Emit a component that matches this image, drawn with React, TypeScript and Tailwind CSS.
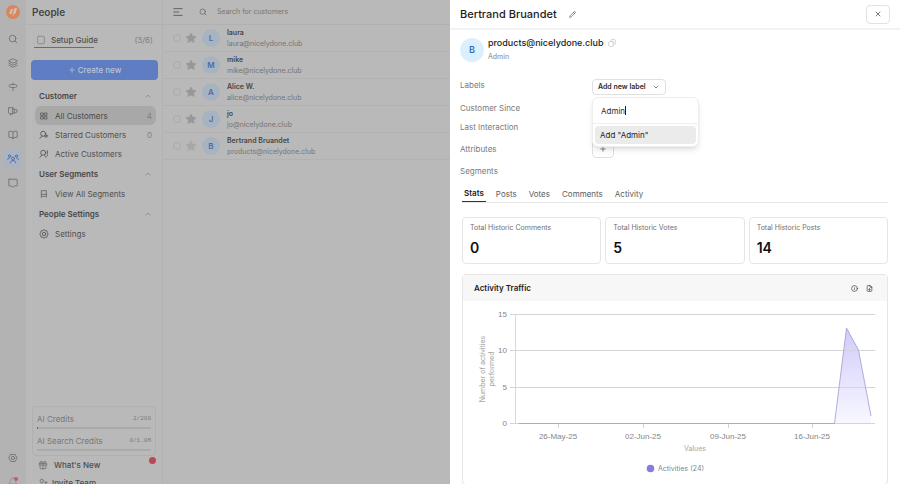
import {
  Bell,
  BookOpen,
  ChevronDown,
  ChevronUp,
  Copy,
  FileDown,
  Gift,
  Info,
  Layers,
  Pencil,
  Plus,
  Search,
  Signpost,
  Star,
  UserPlus,
  X,
} from 'lucide-react'
import type { ReactNode } from 'react'

const customers = [
  { name: 'laura', email: 'laura@nicelydone.club', starred: true },
  { name: 'mike', email: 'mike@nicelydone.club', starred: true },
  { name: 'Alice W.', email: 'alice@nicelydone.club', starred: true },
  { name: 'jo', email: 'jo@nicelydone.club', starred: true },
  { name: 'Bertrand Bruandet', email: 'products@nicelydone.club', starred: false },
]

const stats = [
  { label: 'Total Historic Comments', value: 0 },
  { label: 'Total Historic Votes', value: 5 },
  { label: 'Total Historic Posts', value: 14 },
]

const gridLines = [
  { value: 15, y: 13 },
  { value: 10, y: 49 },
  { value: 5, y: 86 },
  { value: 0, y: 122 },
]

const dates = [
  { label: '26-May-25', x: 96 },
  { label: '02-Jun-25', x: 181 },
  { label: '09-Jun-25', x: 266 },
  { label: '16-Jun-25', x: 350 },
]

function Icon({ children, className }: { children: ReactNode; className: string }) {
  return (
    <svg viewBox="0 0 24 24" fill="none" stroke="currentColor" strokeWidth="2" strokeLinecap="round" strokeLinejoin="round" className={className} aria-hidden="true">
      {children}
    </svg>
  )
}

function Logo() {
  return (
    <svg viewBox="0 0 28 28" className="size-3.5" aria-hidden="true">
      <circle cx="14" cy="14" r="14" fill="#d9865f" />
      <path d="M6.500 18 9 10q.6-2 2.500-2H14l-2.600 8.500Q10.800 18 9 18z" fill="#cbc5c2" />
      <path d="M12.500 22.500 16.500 8q.5-2 2.300-2H22l-2.800 10q-.6 2-2.500 2h-1.500l-1.200 4.500z" fill="#cbc5c2" />
    </svg>
  )
}

function PeopleIcon() {
  return (
    <Icon className="size-3">
      <circle cx="12" cy="11" r="3" />
      <path d="M6.500 20c.5-3 2.500-5 5.500-5s5 2 5.500 5" />
      <circle cx="5" cy="6" r="2.200" />
      <circle cx="19" cy="6" r="2.200" />
      <path d="M1.500 13c.3-2 1.500-3.200 3.500-3.200M22.500 13c-.3-2-1.500-3.200-3.500-3.200" />
    </Icon>
  )
}

function NutIcon({ className }: { className: string }) {
  return (
    <Icon className={className}>
      <path d="M7 3.500h10L22 12l-5 8.500H7L2 12z" />
      <circle cx="12" cy="12" r="4" />
    </Icon>
  )
}

function RailButton({ label, active, children }: { label: string; active?: boolean; children: ReactNode }) {
  return (
    <button
      aria-label={label}
      className={active ? 'flex h-[18px] w-[18px] items-center justify-center rounded bg-[#a9b3c1] text-[#506fb0]' : 'flex h-[18px] w-[18px] items-center justify-center text-[#6c6c6c]'}
    >
      {children}
    </button>
  )
}

function Rail() {
  return (
    <nav aria-label="Main" className="flex w-[26px] shrink-0 flex-col items-center bg-[#b3b3b3]">
      <a href="#home" aria-label="Home" className="flex h-[24px] items-center">
        <Logo />
      </a>
      <div className="flex flex-col gap-1.5 pt-1.5">
        <RailButton label="Search"><Search className="size-2.5" /></RailButton>
        <RailButton label="Feedback"><Layers className="size-2.5" /></RailButton>
        <RailButton label="Roadmap"><Signpost className="size-2.5" /></RailButton>
        <RailButton label="Changelog">
          <Icon className="size-2.5">
            <path d="M2 4h9l4 3v10l-4 2H7l-5-2zM11 4v15M15 8h3a4 4 0 0 1 0 8h-3M6 19v3" />
          </Icon>
        </RailButton>
        <RailButton label="Docs"><BookOpen className="size-2.5" /></RailButton>
        <RailButton label="People" active><PeopleIcon /></RailButton>
        <RailButton label="Widgets">
          <Icon className="size-2.5">
            <path d="M3 3h18a1 1 0 0 1 1 1v14a1 1 0 0 1-1 1h-5l-2 2h-4l-2-2H3a1 1 0 0 1-1-1V4a1 1 0 0 1 1-1z" />
          </Icon>
        </RailButton>
      </div>
      <div className="mt-auto flex flex-col gap-2.5">
        <RailButton label="Settings"><NutIcon className="size-2.5" /></RailButton>
        <div className="relative flex h-[7px] justify-center overflow-hidden text-[#a0808a]">
          <Bell className="size-2.5 shrink-0" />
          <span className="absolute top-0 right-1 size-1 rounded-full bg-[#b5606f]" />
        </div>
      </div>
    </nav>
  )
}

function SectionTitle({ children }: { children: ReactNode }) {
  return (
    <button className="flex h-[21px] w-full items-center justify-between pr-1 text-[8px] font-semibold text-[#474747]">
      {children}
      <ChevronUp className="size-2 text-[#808080]" />
    </button>
  )
}

function SideLink({ icon, label, count, active }: { icon: ReactNode; label: string; count?: number; active?: boolean }) {
  return (
    <a
      href="#people"
      className={active ? '-ml-1 flex h-[19px] items-center gap-1.5 rounded-md bg-[#a8a8a8] px-1 text-[8px] text-[#484848]' : '-ml-1 flex h-[19px] items-center gap-1.5 px-1 text-[8px] text-[#505050]'}
    >
      <span className="flex w-2.5 justify-center">{icon}</span>
      <span>{label}</span>
      {count !== undefined && <span className="ml-auto text-[#808080]">{count}</span>}
    </a>
  )
}

function Credit({ label, value, used }: { label: string; value: string; used?: boolean }) {
  return (
    <div>
      <div className="flex h-[15px] items-center justify-between">
        <span className="text-[8px] text-[#777]">{label}</span>
        <span className="font-['Liberation_Mono',monospace] text-[6px] text-[#7c7c7c]">{value}</span>
      </div>
      <div className="mt-px mb-1 flex h-[2px] rounded-full bg-[#aaa]">
        {used && <div className="w-px bg-[#4c6bab]" />}
      </div>
    </div>
  )
}

function Sidebar() {
  return (
    <aside className="flex w-[137px] shrink-0 flex-col border-r border-[#b2b2b2]">
      <h1 className="flex h-[25px] shrink-0 items-center border-b border-[#b1b1b1] px-1.5 text-[10px] font-semibold text-[#454545]">People</h1>
      <div className="pr-1 pl-[5px]">
        <div className="mt-[7px] flex h-[15px] items-center px-[5px] text-[8px] text-[#505050]">
          <Icon className="mr-[5px] size-2.5 text-[#858585]">
            <rect x="4" y="3" width="16" height="18" rx="2" />
          </Icon>
          <a href="#setup" className="font-medium">Setup Guide</a>
          <span className="ml-auto text-[#808080]">(3/6)</span>
        </div>
        <div className="mx-[3px] h-px w-[60px] bg-[#506fb3]" />
        <button className="mt-3 flex h-[20px] w-full items-center justify-center gap-0.5 rounded bg-[#5e7dc3] text-[8px] font-medium text-[#bcc3d3]">
          <Plus className="size-2" />
          Create new
        </button>
      </div>
      <div className="flex flex-col pt-[5px] pr-1.5 pl-[13px]">
        <SectionTitle>Customer</SectionTitle>
        <SideLink
          active
          label="All Customers"
          count={4}
          icon={
            <Icon className="size-2">
              <rect x="3" y="3" width="7" height="7" />
              <rect x="14" y="3" width="7" height="7" />
              <rect x="3" y="14" width="7" height="7" />
              <rect x="14" y="14" width="7" height="7" />
            </Icon>
          }
        />
        <SideLink
          label="Starred Customers"
          count={0}
          icon={
            <Icon className="size-2.5">
              <circle cx="10" cy="9" r="6" />
              <path d="M2 20c1-2 3-4 5-5M13 15l3 2M16 14h5M18.500 12v5" />
            </Icon>
          }
        />
        <SideLink
          label="Active Customers"
          icon={
            <Icon className="size-2.5">
              <circle cx="10" cy="9" r="6" />
              <path d="M2 20c1-2 3-4 5-5M13 15c2 1 4 3 4 5M20 4v7M20 14v2" />
            </Icon>
          }
        />
        <SectionTitle>User Segments</SectionTitle>
        <SideLink
          label="View All Segments"
          icon={
            <Icon className="size-2">
              <path d="M5 2h14v20l-3-3H8l-3 3zM5 13h14" />
            </Icon>
          }
        />
        <SectionTitle>People Settings</SectionTitle>
        <SideLink
          label="Settings"
          icon={
            <Icon className="size-2.5">
              <path d="m12 2 3 2 4 .5 1 4 2 3.500-2 3.500-1 4-4 .5-3 2-3-2-4-.5-1-4L2 12l2-3.500 1-4L9 4z" />
              <circle cx="12" cy="12" r="4" />
            </Icon>
          }
        />
      </div>
      <div className="mt-auto shrink-0 px-1.5">
        <div className="rounded border border-[#b0b0b0] px-1 pt-1">
          <Credit label="AI Credits" value="2/200" used />
          <Credit label="AI Search Credits" value="0/1.0M" />
        </div>
        <div className="relative h-[28px] overflow-hidden pl-1.5 text-[8px] font-medium text-[#4c4c4c]">
          <a href="#new" className="flex h-[18px] items-center gap-1.5">
            <Gift className="size-2.5 text-[#707070]" />
            What's New
          </a>
          <a href="#invite" className="flex h-[18px] items-center gap-1">
            <UserPlus className="size-2.5 text-[#707070]" />
            Invite Team
          </a>
          <span className="absolute top-px right-0 size-[7px] rounded-full bg-[#b84a58]" />
        </div>
      </div>
    </aside>
  )
}

function CustomerList() {
  return (
    <section className="min-w-0 flex-1">
      <div className="flex h-[25px] items-center border-b border-[#b1b1b1] pl-2.5">
        <button aria-label="Toggle sidebar">
          <Icon className="size-2.5 text-[#505050]">
            <path d="M2 4h20M2 12h12M2 20h20" />
          </Icon>
        </button>
        <Search className="ml-4 size-2 text-[#5a5a5a]" />
        <input aria-label="Search customers" placeholder="Search for customers" className="ml-2.5 w-48 text-[7px] outline-none placeholder:text-[#757575]" />
      </div>
      {customers.map(c => (
        <div key={c.email} className="flex h-[27px] items-center border-b border-[#b2b2b2] pl-2.5">
          <input type="checkbox" aria-label={c.name} className="size-2 appearance-none rounded-full border border-[#ababab]" />
          <Star className={c.starred ? 'ml-1 size-3 fill-[#989898] text-[#989898]' : 'ml-1 size-3 fill-[#a8a8a8] text-[#a8a8a8]'} strokeWidth={1} />
          <span className="ml-[5px] flex size-[18px] items-center justify-center rounded-full bg-[#a7b3c0] text-[8px] font-semibold text-[#4d6da9]">
            {c.name[0].toUpperCase()}
          </span>
          <div className="ml-[7px] leading-[11px]">
            <p className="text-[7px] font-semibold text-[#474747]">{c.name}</p>
            <p className="text-[7px] text-[#757575]">{c.email}</p>
          </div>
        </div>
      ))}
    </section>
  )
}

function Field({ label, className, children }: { label: string; className: string; children?: ReactNode }) {
  return (
    <div className={`flex ${className}`}>
      <span className="w-[132px] text-[8px] text-[#7a7a7a]">{label}</span>
      {children}
    </div>
  )
}

function ActivityChart() {
  return (
    <svg viewBox="1 0 424 183" className="block w-full" role="img" aria-label="Activities per day">
      <defs>
        <linearGradient id="fill" x1="0" y1="0" x2="0" y2="1">
          <stop offset="0" stopColor="#cfcbfa" />
          <stop offset="1" stopColor="#f8f8ff" />
        </linearGradient>
      </defs>
      <path d="M372.500 122 384.500 27 396.500 49 409 115V122z" fill="url(#fill)" />
      <g className="font-['Liberation_Sans',sans-serif] text-[8px]" fill="#858585">
        {gridLines.map(g => (
          <g key={g.value}>
            <path d={`M48 ${g.y + 0.5}H413`} stroke="#d3d3da" />
            <text x="45" y={g.y + 3} textAnchor="end">{g.value}</text>
          </g>
        ))}
        {dates.map(d => (
          <g key={d.label}>
            <path d={`M${d.x + 0.5} 122v5`} stroke="#d3d3da" />
            <text x={d.x} y="138" textAnchor="middle">{d.label}</text>
          </g>
        ))}
      </g>
      <path d="M53.500 13v110" stroke="#d8d8df" />
      <path d="M57 122.500H372.500L384.500 27 396.500 49 409 115" fill="none" stroke="#a39bd0" strokeWidth="0.8" />
      <g className="text-[7px]" fill="#a6a6a6">
        <text transform="translate(23 68) rotate(-90)" textAnchor="middle">Number of activities</text>
        <text transform="translate(32 68) rotate(-90)" textAnchor="middle">performed</text>
        <text x="233" y="150" textAnchor="middle">Values</text>
        <text x="196" y="170" fill="#858585">Activities (24)</text>
      </g>
      <circle cx="188.500" cy="167.500" r="3.800" fill="#857be8" />
    </svg>
  )
}

function LabelPicker() {
  return (
    <div className="relative">
      <button className="flex h-[16px] items-center gap-1.5 rounded border border-[#e0e0e0] px-[5px] text-[7px] font-semibold text-[#2c2c2c]">
        Add new label
        <ChevronDown className="size-2 text-[#444]" />
      </button>
      <div className="absolute top-[18px] left-0 z-10 w-[107px] rounded-md border border-[#eee] bg-white shadow-md">
        <div className="flex h-[25px] items-center px-2">
          <input aria-label="Label name" defaultValue="Admin" className="field-sizing-content text-[8px] text-[#2c2c2c] caret-transparent outline-none" />
          <span className="h-[9px] w-px bg-[#222]" />
        </div>
        <div className="border-t border-[#eee] p-0.5">
          <button className="flex h-[18px] w-full items-center rounded bg-[#ebebeb] px-[5px] text-[8px] text-[#222]">Add "Admin"</button>
        </div>
      </div>
    </div>
  )
}

function CustomerDrawer() {
  return (
    <div role="dialog" aria-label="Bertrand Bruandet" className="absolute inset-y-0 right-0 w-1/2 overflow-hidden bg-white">
      <header className="flex h-[30px] items-center border-b-2 border-[#f2f2f2] px-2.5">
        <h2 className="text-[11px] font-medium text-[#1c1c1c]">Bertrand Bruandet</h2>
        <button aria-label="Rename" className="ml-3"><Pencil className="size-[7px] text-[#444]" /></button>
        <button aria-label="Close" className="ml-auto flex h-[19px] w-[24px] items-center justify-center rounded border border-[#e2e2e2]">
          <X className="size-2 text-[#333]" />
        </button>
      </header>

      <div className="px-2.5">
        <div className="flex items-center pt-[6px]">
          <span className="flex size-6 items-center justify-center rounded-full bg-[#dceffc] text-[9px] font-semibold text-[#2f6fc8]">B</span>
          <div className="ml-1">
            <p className="flex h-[14px] items-center gap-1 text-[9px] font-medium text-[#1c1c1c]">
              products@nicelydone.club
              <Copy className="size-2 -scale-x-100 text-[#bbb]" />
            </p>
            <p className="h-[14px] text-[7px] leading-[14px] text-[#858585]">Admin</p>
          </div>
        </div>

        <div className="pt-[13px]">
          <Field label="Labels" className="h-[20px] items-start pt-0.5"><LabelPicker /></Field>
          <Field label="Customer Since" className="h-[22px] items-center" />
          <Field label="Last Interaction" className="h-[16px] items-center" />
          <Field label="Attributes" className="h-[28px] items-center">
            <button aria-label="Add attribute" className="flex h-[18px] w-[22px] items-center justify-center rounded border border-[#e0e0e0]">
              <Plus className="size-2 text-[#555]" />
            </button>
          </Field>
          <Field label="Segments" className="h-[16px] items-center" />
        </div>
      </div>

      <div className="px-3">
        <div role="tablist" className="mt-1.5 flex h-[18px] gap-2.5 border-b border-[#e8e8e8] text-[8px] text-[#5c5c5c]">
          <button role="tab" aria-selected="true" className="border-b border-[#333] px-0.5 font-semibold text-[#222]">Stats</button>
          <button role="tab">Posts</button>
          <button role="tab" className="px-0.5">Votes</button>
          <button role="tab">Comments</button>
          <button role="tab" className="px-0.5">Activity</button>
        </div>

        <div className="mt-3.5 grid grid-cols-3 gap-1">
          {stats.map(s => (
            <div key={s.label} className="h-[47px] rounded border border-[#e6e6e6] px-[7px] pt-1">
              <p className="text-[7px] leading-[12px] text-[#707070]">{s.label}</p>
              <p className="mt-1 text-[14px] leading-[20px] font-semibold text-[#111]">{s.value}</p>
            </div>
          ))}
        </div>

        <section className="mt-2.5 rounded border border-[#e6e6e6]">
          <div className="flex h-[26px] items-center gap-2 bg-[#f7f7f7] pr-3.5 pl-[11px]">
            <h3 className="mr-auto text-[8px] font-semibold text-[#1c1c1c]">Activity Traffic</h3>
            <button aria-label="About this chart"><Info className="size-[7px] text-[#222]" /></button>
            <button aria-label="Download"><FileDown className="size-[7px] text-[#222]" /></button>
          </div>
          <ActivityChart />
        </section>
      </div>
    </div>
  )
}

function App() {
  return (
    <main className="relative flex h-screen overflow-hidden bg-[#b9b9b9] font-['Inter',sans-serif]">
      <Rail />
      <Sidebar />
      <CustomerList />
      <CustomerDrawer />
    </main>
  )
}

export default App
